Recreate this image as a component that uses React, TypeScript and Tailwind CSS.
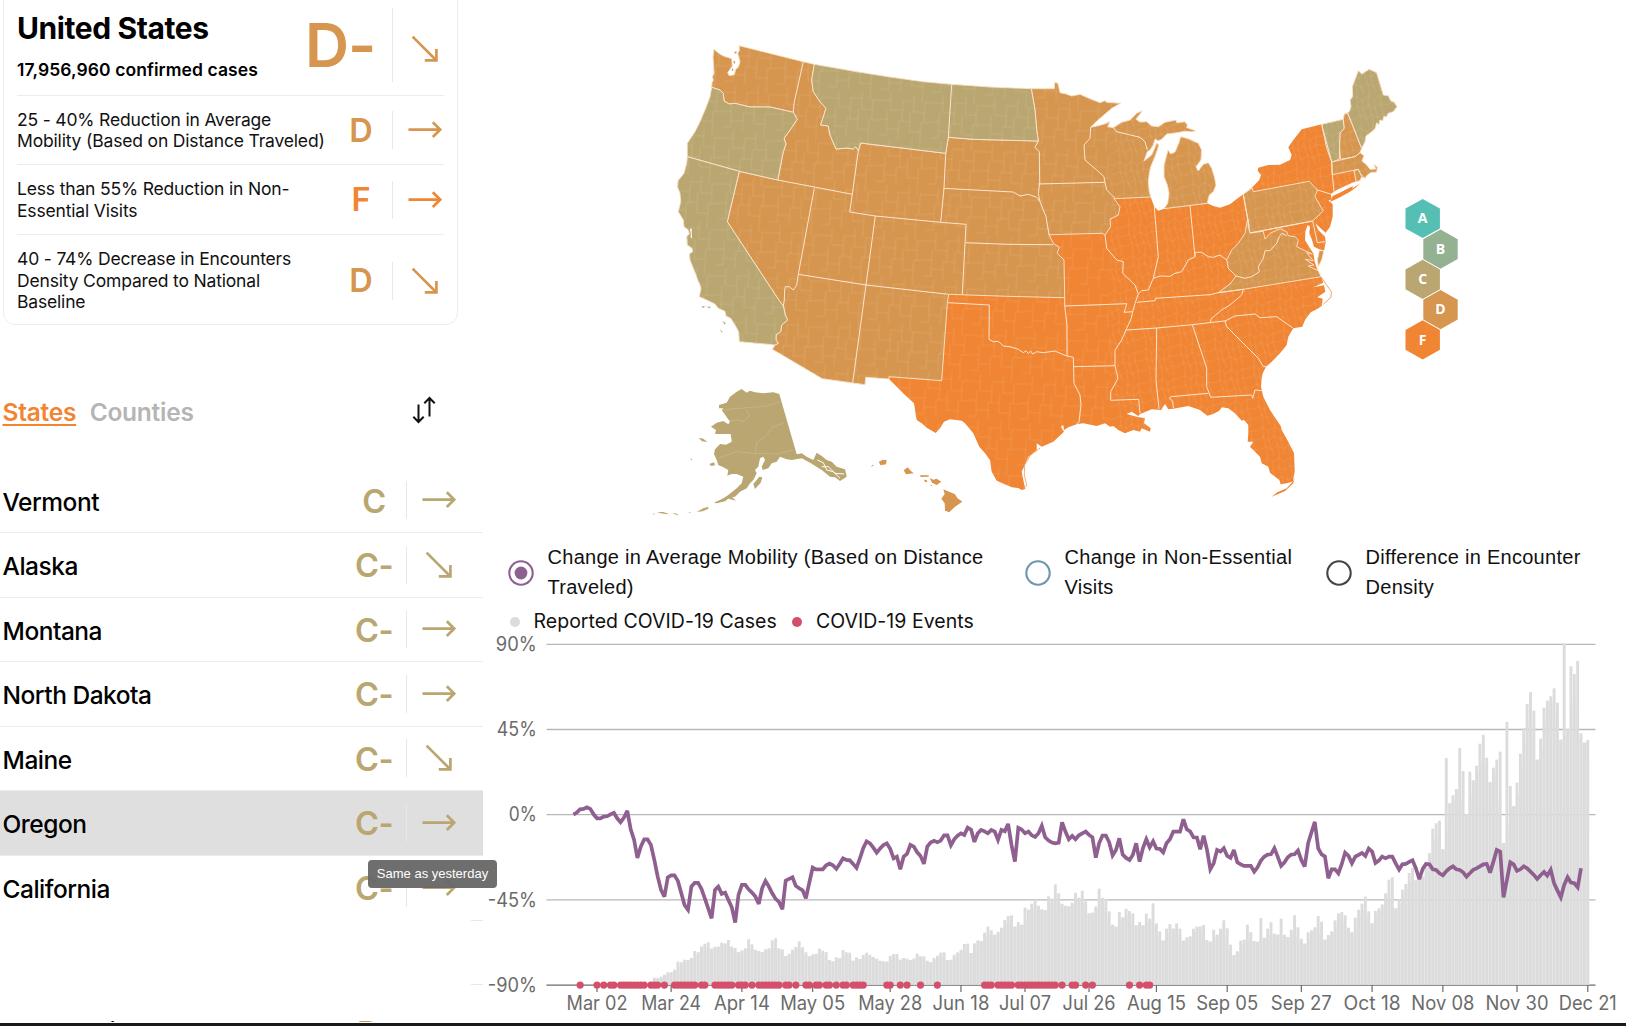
import React from "react";

const GRADE = { A: "#55bfb4", B: "#94b292", C: "#b9a670", D: "#d6964f", F: "#f08533" };

/* ---------- arrows ---------- */

type Trend = "flat" | "down";

function Arrow({ trend, color }: { trend: Trend; color: string }) {
  return (
    <svg width="34" height="30" viewBox="0 0 34 30" fill="none" stroke={color} strokeWidth="2.7" className="shrink-0">
      {trend === "flat" ? (
        <path d="M0.5 14.6H32M24.8 7.2L32.2 14.6L24.8 22" />
      ) : (
        <path d="M4.6 2.6L28.2 26.2M16.8 26.4H28.4V14.9" />
      )}
    </svg>
  );
}

/* ---------- summary card ---------- */

function Metric({ text, grade, color, trend, height }: { text: string[]; grade: string; color: string; trend: Trend; height: string }) {
  return (
    <div className={`flex items-center border-t border-[#ececec] ${height}`}>
      <div className="w-[316px] whitespace-nowrap text-[17.5px] leading-[21.5px] tracking-[-0.17px] text-[#111]">
        {text.map((t) => (
          <div key={t}>{t}</div>
        ))}
      </div>
      <div className="w-[56px] pt-px text-center text-[32.5px] leading-[38px] font-semibold" style={{ color }}>
        {grade}
      </div>
      <div className="ml-[3px] h-[38px] w-px bg-[#e8e8e8]" />
      <div className="ml-[15px]">
        <Arrow trend={trend} color={color} />
      </div>
    </div>
  );
}

function Summary() {
  return (
    <div className="-mt-[12px] ml-[3px] h-[337px] w-[455px] rounded-xl border border-[#ececec] pt-[11px] pr-[13px] pl-[13px]">
      <div className="flex h-[95px]">
        <div className="w-[288px]">
          <div className="pt-[9px] text-[30px] leading-[38px] font-bold tracking-[-0.4px] whitespace-nowrap text-black">United States</div>
          <div className="pt-[12px] text-[17.5px] leading-[22px] font-semibold tracking-[0.08px] whitespace-nowrap text-black">17,956,960 confirmed cases</div>
        </div>
        <div className="-mt-[2px] w-[87px] text-[61px] leading-[94px] font-semibold tracking-[-1px] whitespace-nowrap text-[#d6964f]">D-</div>
        <div className="mt-[8px] h-[74px] w-px bg-[#e8e8e8]" />
        <div className="mt-[34px] ml-[15px]">
          <Arrow trend="down" color={GRADE.D} />
        </div>
      </div>
      <Metric text={["25 - 40% Reduction in Average", "Mobility (Based on Distance Traveled)"]} grade="D" color={GRADE.D} trend="flat" height="h-[69px]" />
      <Metric text={["Less than 55% Reduction in Non-", "Essential Visits"]} grade="F" color={GRADE.F} trend="flat" height="h-[70px]" />
      <Metric text={["40 - 74% Decrease in Encounters", "Density Compared to National", "Baseline"]} grade="D" color={GRADE.D} trend="down" height="h-[92px]" />
    </div>
  );
}

/* ---------- state list ---------- */

const STATES: { name: string; grade: string; trend: Trend }[] = [
  { name: "Vermont", grade: "C", trend: "flat" },
  { name: "Alaska", grade: "C-", trend: "down" },
  { name: "Montana", grade: "C-", trend: "flat" },
  { name: "North Dakota", grade: "C-", trend: "flat" },
  { name: "Maine", grade: "C-", trend: "down" },
  { name: "Oregon", grade: "C-", trend: "flat" },
  { name: "California", grade: "C-", trend: "flat" },
];

function StateList() {
  return (
    <div className="w-[483px]">
      {STATES.map((s) => (
        <div
          key={s.name}
          className={`flex h-[64.5px] items-center ${s.name === "California" ? "" : "border-b border-[#ececec]"} ${s.name === "Oregon" ? "bg-[#dfdfdf]" : ""}`}
        >
          <div className="w-[343px] pt-[4px] pl-[2.5px] text-[24.5px] font-medium tracking-[-0.48px] text-black">{s.name}</div>
          <div className="w-[62px] pt-[3px] text-center text-[32.5px] leading-[38px] font-semibold tracking-[-0.5px] text-[#b9a670]">{s.grade}</div>
          <div className="ml-px h-[38px] w-px bg-[#e8e8e8]" />
          <div className="ml-[15px]">
            <Arrow trend={s.trend} color={GRADE.C} />
          </div>
        </div>
      ))}
      <div className="ml-auto h-[65px] w-[12px] border-y border-[#e8e8e8]" />
      <div className="flex h-[37px] items-end overflow-hidden">
        <div className="flex h-[3px] w-full items-start">
          <div className="w-[357px] pl-[3px] text-[24.5px] leading-[24px] font-medium tracking-[-0.4px] text-black">New Mexico</div>
          <div className="text-[32.5px] leading-[29px] font-semibold text-[#d6964f]">D+</div>
        </div>
      </div>
    </div>
  );
}

/* ---------- map ---------- */

/* The map is plotted on overlapping sheets; every sheet has its own origin in a grid of thirds of a pixel. */
const SHEETS = {
  nw: [1920, 90],
  sw: [1920, 840],
  n: [2820, 180],
  ne: [3540, 180],
  s: [2820, 870],
} as const;

type Piece = [keyof typeof SHEETS, string];

function trace(pieces: Piece[]): string {
  return pieces
    .map(([sheet, pts]) => {
      const [ox, oy] = SHEETS[sheet];
      return pts
        .trim()
        .split(/\s+/)
        .map((p) => {
          const [x, y] = p.split(",").map(Number);
          return `${((x + ox) / 3).toFixed(1)},${((y + oy) / 3).toFixed(1)}`;
        })
        .join(" ");
    })
    .join(" ");
}

const MN_WI_MI_SHORE: Piece = [
  "n",
  "274,86 343,86 344,67 354,70 360,98 376,101 395,108 420,103 445,114 480,128 495,122 500,127 542,130 515,145 480,175 458,195 452,202 475,197 500,190 510,184 503,200 520,203 545,187 570,180 590,160 607,152 600,162 588,178 600,186 620,185 635,198 655,200 675,187 708,180 710,188 735,185 742,195 740,203 768,212 755,215 735,214 700,220 680,222 665,238 655,242 645,238 640,255 630,270 622,275 612,303 635,285 650,250 657,254 645,290 632,320 628,340 625,365 628,395 632,411",
];
const LOWER_MI: Piece[] = [
  ["n", "672,446 683,430 687,400 682,375 672,350 672,315 680,285 684,270 692,282 705,276 718,245 722,230 745,236 775,250 785,270 783,300 768,320 775,333 788,315"],
  ["ne", "72,312 85,308 95,325 103,350 108,375 100,395 88,405 82,430"],
];
const WA_COAST: Piece = ["nw", "215,172 216,158 220,150 217,140 222,130 219,80 222,57 232,67 248,77 275,86 277,108 263,128 268,137 283,134 287,118 295,112 300,95 293,70 298,62 298,47"];
const PACIFIC_SOUTH: Piece = ["sw", "405,195 298,185 296,155 285,135 272,115 258,108 255,94 235,85 225,72 200,60 178,50 183,25 176,5"];
const PACIFIC_NORTH: Piece = ["nw", "175,755 168,735 150,690 148,672 158,665 156,655 142,645 140,620 148,612 145,600 132,590 130,570 115,545 122,515 120,490 112,470 114,452 132,430 140,400 142,380"];
const OR_COAST = "142,380 142,340 165,305 180,275 197,235 210,200 215,172";
const CA_EAST = "298,424 262,575 415,808";
const CO_RIVER = "430,78 436,105 443,120 425,135 422,155 408,165 408,180 415,190 405,195";

const OUTLINE = trace([
  WA_COAST,
  ["nw", "490,95 523,103 650,125 750,141 850,155 935,163"],
  ["n", "150,81"],
  MN_WI_MI_SHORE,
  ["n", "643,440 655,452"],
  ...LOWER_MI,
  ["ne", "100,438 120,443 150,433 175,413 190,403 217,382 238,360 243,345 233,332 235,323 265,315 300,314 330,300 335,285 325,262 340,240 365,208 425,193 490,178 493,162 500,160 508,155 513,140 510,120 518,110 517,80 535,32 545,42 568,28 590,38 610,105 625,107 632,122 643,127 651,140 640,155 625,160 618,172 612,168 608,182 600,180 596,195 590,188 586,205 575,215 558,228 555,245 545,265 540,278 552,287 546,303 560,315 570,328 587,327 582,313 592,322 590,336 572,338 562,345 555,355 545,350 540,362 522,366 495,378 470,390 452,402 455,418 445,422 458,432 458,470 450,500 437,518 425,508 406,490 415,510 435,530 437,545 432,572 418,568 402,560 396,540 388,520 390,500 383,495 376,515 375,540 387,560 400,580 404,605 412,628 423,650 430,668 400,682 432,676 436,695 412,712 428,716 425,738 410,748 392,757 375,780 367,800 340,805 325,830 320,855 300,880 275,905 258,920 248,940"],
  ["s", "965,265 963,290 970,320 990,360 1022,408 1025,420 1045,455 1062,490 1064,545 1058,575 1040,580 1022,583 1018,570 990,548 985,530 965,520 960,500 930,470 940,455 923,455 925,430 925,405 912,390 905,392 885,370 865,355 845,352 838,362 820,372 802,377 780,360 745,348 700,356 685,358 675,342 668,352 664,360 635,358 610,368 600,372 595,378 575,365 560,372 590,380 615,385 612,400 632,415 630,425 605,415 600,425 580,420 555,430 535,420 520,408 510,410 495,400 470,408 430,400 412,402 385,412 372,420 370,405 363,410 372,425 340,455 305,470 290,460 290,480 265,500 252,530 245,545 250,570 256,597 245,600 235,594 215,592 170,572 155,545 150,510 135,490 118,470 100,430 75,400 65,392 30,388 12,395 0,415"],
  ["sw", "887,459 860,443 845,430 830,420 825,390 822,370 795,345 765,315 747,297 677,292 675,314 547,296 397,208"],
  PACIFIC_SOUTH,
  PACIFIC_NORTH,
  ["nw", OR_COAST],
]);

const D_STATES = [
  trace([
    WA_COAST,
    ["nw", "490,95 523,103 515,150 520,185 540,215 558,235 542,285 565,288 570,315 588,357 620,354 640,357 647,350 655,362 662,339 917,370 925,322"],
    ["n", "100,238 295,243 290,210 285,150"],
    MN_WI_MI_SHORE,
    ["n", "522,416 540,440 535,465 510,478 512,500 495,525 487,520 327,524 340,550 358,562 352,580 372,600 374,713 200,709 26,703"],
    ["sw", "922,70 905,302 747,290 747,297 677,292 675,314 547,296 397,208 405,195 415,190 408,180 408,165 422,155 425,135 443,120 436,105 430,78"],
    ["nw", "415,808 262,575 298,424 413,450 430,365 438,342 432,325 450,300 472,268 460,247 390,231 330,231 285,220 268,222 252,213 250,190 240,180"],
  ]),
  trace(LOWER_MI),
  trace([["ne", "190,403 217,384 220,395 388,364 412,390 405,410 430,453 398,483 210,519"]]),
  trace([["ne", "203,475 205,500 210,519 250,514 255,537 270,520 300,506 320,515 325,527 345,530 355,540 350,560 375,572 397,582 380,578 400,602 376,598 402,615 385,618 415,632 423,650 190,688 115,698 150,672 168,648 145,625 140,600 155,570 175,550 195,520"]]),
  trace([["ne", "432,572 425,600 415,620 412,600 418,572"]]),
  trace([["ne", "490,178 493,162 503,160 545,265 540,278 525,290 482,298 478,260 480,220 492,205"]]),
  trace([["ne", "455,306 482,300 525,290 540,278 552,287 546,303 560,315 570,328 587,327 582,313 592,322 590,336 572,338 562,345 555,355 540,340 535,328 457,344"]]),
  trace([["ne", "522,332 535,328 545,350 540,362 528,365"]]),
];

const C_STATES = [
  trace([["nw", `215,172 240,180 250,190 252,213 268,222 285,220 330,231 390,231 460,247 472,268 450,300 432,325 438,342 430,365 413,450 298,424 ${OR_COAST}`]]),
  trace([["nw", `142,380 ${CA_EAST}`], ["sw", CO_RIVER], PACIFIC_SOUTH, PACIFIC_NORTH]),
  trace([
    ["nw", "523,103 515,150 520,185 540,215 558,235 542,285 565,288 570,315 588,357 620,354 640,357 647,350 655,362 662,339 917,370 925,322"],
    ["n", "100,238 295,243 290,210 285,150 274,86 150,81 35,73"],
    ["nw", "850,155 750,141 650,125"],
  ]),
  trace([["ne", "425,193 490,178 492,205 480,220 478,298 455,306 440,265"]]),
  trace([["ne", "503,158 508,155 513,140 510,120 518,110 517,80 535,32 545,42 568,28 590,38 610,105 625,107 632,122 643,127 651,140 640,155 625,160 618,172 612,168 608,182 600,180 596,195 590,188 586,205 575,215 558,228 555,245 545,265"]]),
];

const BORDERS = [
  trace([["nw", "490,95 462,220 460,247"]]),
  trace([["nw", "935,163 925,322"]]),
  trace([["nw", "413,450 637,493"]]),
  trace([["nw", "655,362 637,493 629,546 706,558 902,577 912,475 917,370"]]),
  trace([["nw", "523,475 475,733 470,765 460,780 448,770 436,770 434,780"], ["sw", "433,60 430,78"]]),
  trace([["nw", "706,558 678,765"], ["sw", "638,308"]]),
  trace([["nw", "475,733 678,765 925,793"]]),
  trace([["nw", "902,577 978,583"], ["n", "67,703"]]),
  trace([["n", "10,385 220,396 240,408 265,403 290,412 300,425"]]),
  trace([["n", "295,243 285,262 298,275 299,370 295,400 300,425 318,470 327,524"]]),
  trace([["n", "294,372 495,367"]]),
  trace([["n", "452,202 450,235 432,255 435,300 470,330 492,350 495,367 500,390 525,415"]]),
  trace([["n", "520,203 530,215 600,232 615,245 622,270"]]),
  trace([["n", "77,548 200,553 340,554"]]),
  trace([["n", "374,713 374,738 560,731 553,757 578,755"]]),
  trace([["s", "374,48 381,105 381,198"]]),
  trace([["s", "24,38 148,45 147,148 160,155 175,154 190,168 210,170 235,178 250,188 258,182 265,191 272,183 278,192 290,185 310,188 345,183 365,192 381,198 400,202 402,280 420,315 423,345 417,395 410,402"]]),
  trace([["s", "402,230 525,227"]]),
  trace([["n", "495,525 500,565 530,600 550,605 548,640 585,675 595,702 585,730 578,755"], ["s", "574,85 560,115 545,150 525,180 525,227 534,265 512,305 512,331 596,328 600,370"]]),
  trace([["n", "643,440 655,590 640,655"]]),
  trace([["n", "595,702 605,692 625,690 640,655 660,648 690,649 705,640 725,635 745,600 765,590"], ["ne", "45,577 65,577 85,590 100,592 120,585 140,600"]]),
  trace([["n", "750,437 765,590"]]),
  trace([["n", "590,727 645,722 647,715 810,704"], ["ne", "115,698 190,688"]]),
  trace([["s", "558,120 650,114 757,104 860,92"]]),
  trace([["ne", "190,688 185,705 150,735 125,750 95,775 90,787"]]),
  trace([["ne", "135,783 165,768 225,762 240,773 290,770 340,805"]]),
  trace([["ne", "135,783 140,800 200,860 235,895 250,920 258,920"]]),
  trace([["s", "650,114 648,270 657,357"]]),
  trace([["s", "757,104 800,235 800,290 812,322 935,315 938,325 945,300 965,302"]]),
  trace([["s", "700,354 698,333 688,325 692,320 805,310"]]),
  trace([["ne", "425,193 455,306 457,344 462,395"]]),
  trace([["ne", "412,390 452,402"]]),
  trace([["ne", "190,403 203,475 208,500"]]),
  trace([["ne", "398,483 412,548 435,545"]]),
  trace([["ne", "210,519 398,483"]]),
  trace([["ne", "320,527 305,520 298,530 290,550 270,572 255,572 250,595 235,620 238,635 215,650 195,655 168,648"]]),
];

const ISLANDS_F = [
  trace([["ne", "450,426 458,408 485,395 505,385 520,378 516,386 540,370 525,385 510,395 480,412"]]),
  trace([["s", "1064,560 1060,580 1035,603 1015,612 995,620 1012,607 1040,595 1058,575"]]),
];
const ALASKA = [
  trace([["sw", "418,342 470,523 485,520 500,530 520,540 530,518 545,528 560,540 575,545 590,560 615,568 620,590 600,603 585,592 570,590 545,570 510,548 485,535 455,540 440,538 420,530 410,545 395,550 385,565 368,570 365,560 375,540 370,530 360,535 355,560 345,570 350,580 340,600 330,610 320,625 300,635 285,650 270,652 255,664 230,670 222,668 250,655 265,645 290,625 305,610 310,590 290,582 275,582 262,587 265,570 250,562 235,555 230,540 222,522 225,508 240,492 258,494 275,485 272,462 250,462 225,462 228,450 213,440 230,428 250,423 265,433 270,425 245,390 250,385 237,385 237,375 260,368 270,350 290,335 305,327 320,338 330,332 345,337 370,340 400,337"]]),
  trace([["sw", "340,612 358,590 367,592 362,608 345,627"]]),
  trace([["sw", "176,473 190,476 202,486 186,484"]]),
  trace([["sw", "208,552 222,547 225,556 214,558"]]),
  trace([["sw", "170,696 190,685 205,680 205,686 188,694"]]),
  trace([["sw", "50,697 70,696 85,701 82,703 62,700"]]),
  trace([["sw", "96,699 112,701 115,706 104,703"]]),
  trace([["sw", "38,702 44,700 42,704"]]),
  trace([["sw", "145,698 152,696 150,700"]]),
  trace([["sw", "260,655 275,650 288,662 272,658"]]),
  trace([["sw", "150,534 158,540 154,541"]]),
  trace([["sw", "183,80 194,78 192,84"]]),
  trace([["sw", "198,80 212,80 210,85"]]),
  trace([["sw", "247,122 257,130 254,134"]]),
  trace([["sw", "240,147 248,157 244,157"]]),
];
const HAWAII = [
  "716,546 728,539 740,540 738,553 722,556",
  "693,562 697,555 703,554",
  "791,571 803,562 812,572 821,580 798,583",
  "840,586 866,586 866,590 842,591",
  "852,599 860,600 862,606 855,606",
  "869,594 880,599 890,596 904,605 890,615 876,608",
  "870,617 877,615 876,619",
  "910,628 945,643 952,654 967,665 945,680 928,697 915,692 914,670 904,656 914,642",
].map((p) => trace([["sw", p]]));

const HEXES = [
  { l: "A", x: 1422.7, y: 218.5 },
  { l: "B", x: 1440.5, y: 249.1 },
  { l: "C", x: 1422.7, y: 279.3 },
  { l: "D", x: 1440.5, y: 309.6 },
  { l: "F", x: 1422.7, y: 339.8 },
] as const;

function UsMap() {
  const edge = "#fbe6d0";
  return (
    <svg viewBox="483 0 1143 535" width="1143" height="535" className="block shrink-0" strokeLinejoin="round">
      <defs>
        <pattern id="plains" width="52" height="46" patternUnits="userSpaceOnUse" patternTransform="rotate(3)">
          <path
            d="M0 8H11V17H23V7H34V18H45V8H52M0 27H8V36H20V28H31V38H42V28H52M11 0V8M23 17V28M34 0V7M45 18V28M8 17V27M20 36V46M42 38V46M31 18V28M0 43H8V36M42 0V8"
            fill="none"
            stroke="#fff"
            strokeOpacity="0.15"
            strokeWidth="0.8"
          />
        </pattern>
        <pattern id="hills" width="41" height="37" patternUnits="userSpaceOnUse" patternTransform="rotate(-8) scale(0.85)">
          <path
            d="M0 5L7 2L13 7L21 3L27 8L35 4L41 5M0 16L6 13L12 18L19 13L26 18L33 14L41 16M0 28L8 24L14 29L22 25L28 30L35 26L41 28M7 2L8 0M13 7L12 18M21 3L22 0M27 8L26 18M6 13L7 2M19 13L21 3M33 14L35 4M8 24L6 13M14 29L12 18M22 25L19 13M28 30L26 18M35 26L33 14M8 37L8 24M14 29L16 37M22 37L22 25M28 30L30 37M35 37L35 26"
            fill="none"
            stroke="#fff"
            strokeOpacity="0.14"
            strokeWidth="0.8"
          />
        </pattern>
        <clipPath id="east">
          <rect x="1110" y="0" width="300" height="535" />
        </clipPath>
        <clipPath id="west">
          <rect x="600" y="0" width="510" height="535" />
        </clipPath>
      </defs>
      <polygon points={OUTLINE} fill={GRADE.F} />
      {ISLANDS_F.map((p) => (
        <polygon key={p} points={p} fill={GRADE.F} />
      ))}
      <g stroke={edge} strokeWidth="0.9">
        {D_STATES.map((p) => (
          <polygon key={p} points={p} fill={GRADE.D} />
        ))}
        {C_STATES.map((p) => (
          <polygon key={p} points={p} fill={GRADE.C} />
        ))}
      </g>
      <polygon points={OUTLINE} fill="url(#plains)" clipPath="url(#west)" />
      <polygon points={OUTLINE} fill="url(#hills)" clipPath="url(#east)" />
      {BORDERS.map((p) => (
        <polyline key={p} points={p} fill="none" stroke={edge} strokeWidth="1" />
      ))}
      {ALASKA.map((p) => (
        <polygon key={p} points={p} fill={GRADE.C} />
      ))}
      <g fill="none" stroke="#fff" strokeOpacity="0.2" strokeWidth="0.8">
        <polyline points={trace([["sw", "245,390 300,385 380,378 420,365"]])} />
        <polyline points={trace([["sw", "250,425 290,420 315,425 328,405 318,390"]])} />
        <polyline points={trace([["sw", "345,520 350,490 380,465 400,440 430,430"]])} />
        <polyline points={trace([["sw", "235,535 290,515 340,520 410,522 460,510"]])} />
      </g>
      <g fill="none" stroke="#fff" strokeWidth="1">
        <polyline points={trace([["sw", "532,540 550,548 560,570 580,575 600,595"]])} />
        <polyline points={trace([["sw", "545,560 565,560 585,580 612,582"]])} />
      </g>
      {HAWAII.map((p) => (
        <polygon key={p} points={p} fill={GRADE.D} />
      ))}
      <g fill={GRADE.D}>
        <polygon points={trace([["nw", "279,95 286,92 284,102"]])} />
        <polygon points={trace([["nw", "282,66 290,64 288,72"]])} />
        <polygon points={trace([["nw", "274,120 279,114 280,124"]])} />
      </g>
      <polygon points={trace([["nw", "150,597 155,595 155,612 157,626 152,622 152,610"]])} fill="#fff" />
      <polyline points={trace([["s", "256,592 260,585 253,555 254,525 270,497 300,474"]])} fill="none" stroke="#f4a266" strokeWidth="0.9" />
      <polyline points={trace([["ne", "423,650 440,675 454,695 453,712 430,733"]])} fill="none" stroke="#f4a266" strokeWidth="1" />
      {HEXES.map((h) => (
        <g key={h.l}>
          <polygon
            points={`${h.x},${h.y - 19.6} ${h.x + 17.2},${h.y - 9.9} ${h.x + 17.2},${h.y + 9.9} ${h.x},${h.y + 19.6} ${h.x - 17.2},${h.y + 9.9} ${h.x - 17.2},${h.y - 9.9}`}
            fill={GRADE[h.l]}
          />
          <text x={h.x} y={h.y + 4.8} textAnchor="middle" fill="#fff" className="font-['Open_Sans',sans-serif] text-[14px] font-bold">
            {h.l}
          </text>
        </g>
      ))}
    </svg>
  );
}

/* ---------- chart ---------- */

const DAY = 3.37;
const X0 = 597;
const dayX = (d: number) => X0 + d * DAY;

/* Levels in thirds of a pixel below the top of each half of the season. */
const LINE_SPRING = [
  104, 98, 88, 87, 82, 87, 103, 115, 115, 110, 109, 103, 99, 115, 127, 113, 93, 148, 180, 234, 200, 178, 178, 195, 240, 290, 330, 350, 292, 286, 286, 303, 340, 376, 390, 320, 309, 309, 327, 355, 385, 415, 330, 320, 342, 338, 360, 382, 428, 345, 315, 315, 328, 338, 350, 372, 325, 303, 320, 340, 357, 366, 388, 302, 297, 292, 318, 325, 331, 355, 308, 263, 268, 268, 268, 256, 251, 256, 267, 252, 235, 240, 241, 252, 264, 235, 205, 184, 190, 203, 218, 206, 195, 190, 207, 235, 230, 268, 230, 222, 195, 200, 217, 228, 252, 200, 188, 183, 187, 182, 166, 166, 196, 178, 167, 160, 165, 143, 149, 186, 160, 150, 154, 160, 150, 155, 180, 150, 154, 132, 195, 245, 144, 149, 160, 155, 166, 171, 160, 138, 172, 182, 188, 190, 188,
];
const LINE_AUTUMN = [
  187, 215, 238, 228, 238, 226, 220, 215, 225, 232, 293, 250, 227, 227, 247, 286, 270, 235, 284, 294, 300, 285, 250, 305, 265, 238, 262, 244, 266, 267, 277, 250, 238, 215, 215, 215, 178, 208, 214, 232, 233, 268, 227, 270, 328, 310, 270, 275, 265, 288, 294, 270, 307, 313, 318, 318, 318, 335, 322, 302, 290, 284, 283, 265, 290, 318, 307, 292, 284, 283, 272, 300, 320, 250, 218, 186, 265, 283, 289, 355, 328, 328, 340, 312, 278, 288, 310, 290, 285, 279, 288, 266, 275, 309, 302, 290, 295, 290, 290, 310, 329, 313, 312, 306, 301, 325, 358, 327, 312, 313, 328, 330, 340, 346, 334, 325, 319, 328, 330, 337, 350, 340, 330, 325, 319, 313, 312, 338, 305, 270, 275, 412, 360, 307, 313, 333, 328, 319, 325, 335, 345, 357, 346, 336, 347, 330, 370, 392, 412, 375, 352, 368, 370, 382, 325,
];
const BARS_SPRING = [
  594, 596, 591, 585, 578, 578, 570, 546, 548, 540, 541, 535, 514, 518, 500, 492, 488, 507, 501, 501, 489, 491, 481, 501, 505, 518, 512, 506, 479, 494, 510, 514, 517, 509, 506, 482, 476, 506, 509, 529, 522, 510, 502, 485, 503, 518, 530, 524, 522, 507, 513, 517, 541, 545, 533, 536, 511, 518, 519, 543, 533, 538, 526, 519, 525, 532, 537, 543, 545, 546, 529, 523, 523, 540, 535, 537, 541, 537, 522, 530, 530, 543, 548, 535, 528, 519, 518, 541, 540, 525, 518, 510, 493, 492, 520, 491, 482, 484, 459, 441, 452, 465, 456, 444, 421, 409, 407, 441, 427, 435, 384, 390, 372, 360, 378, 389, 392, 350, 357, 314,
];
const BARS_AUTUMN = [
  401, 432, 438, 440, 429, 399, 414, 393, 425, 461, 459, 440, 387, 414, 418, 455, 495, 501, 457, 473, 447, 454, 461, 497, 487, 497, 462, 477, 431, 491, 515, 543, 507, 493, 507, 491, 507, 543, 533, 530, 507, 501, 500, 496, 541, 546, 510, 525, 507, 482, 506, 555, 586, 575, 543, 540, 495, 518, 544, 546, 475, 534, 507, 488, 522, 525, 477, 525, 532, 510, 467, 503, 537, 552, 518, 512, 503, 469, 486, 540, 526, 515, 482, 461, 457, 467, 504, 518, 474, 450, 432, 411, 455, 491, 454, 446, 434, 401, 360, 353, 446, 419, 390, 373, 340, 325, 362, 358, 350, 310, 280, 207, 191, 183, 269, -5, 131, 107, 88, -35, 34, 163, 36, 62, 18, -48, -75, -6, 68, 24, 0, -24, 250, -113, 79, 140, 69, -18, -95, -167, -203, -147, 0, -63, -156, -177, -190, -214, -171, -60, -348, -92, -280, -257, -296, -79, -51, -59,
];

const LINE = [...LINE_SPRING.map((v) => v - 104), ...LINE_AUTUMN.map((v) => v - 164)].map((v, i) => `${dayX(i - 7).toFixed(1)},${(814.6 + v / 3).toFixed(1)}`).join(" ");
const BARS = [...BARS_SPRING.map((v) => 616 - v), ...BARS_AUTUMN.map((v) => 676 - v)].map((v) => v / 3);
const FIRST_BAR = 295 - BARS.length;

const EVENT_RUNS = [
  [-5, -5], [0, 0], [2, 2], [4, 5], [7, 14], [16, 18], [20, 20], [23, 29], [31, 32], [35, 40], [42, 44], [46, 46], [48, 54], [56, 57], [59, 59], [62, 63], [65, 66], [68, 69], [71, 71], [73, 74], [76, 79],
  [86, 87], [90, 90], [92, 92], [96, 96], [101, 101], [115, 117], [119, 123], [125, 136], [138, 138], [141, 142], [145, 145], [147, 147], [158, 158], [161, 161], [163, 164],
];
const EVENTS = EVENT_RUNS.flatMap(([a, b]) => Array.from({ length: b - a + 1 }, (_, i) => a + i));

const TICKS: [number, string, number][] = [
  [0, "Mar 02", 61], [22, "Mar 24", 60], [43, "Apr 14", 56], [64, "May 05", 65], [87, "May 28", 64], [108, "Jun 18", 57], [127, "Jul 07", 52], [146, "Jul 26", 53],
  [166, "Aug 15", 59], [187, "Sep 05", 62], [209, "Sep 27", 61], [230, "Oct 18", 57], [251, "Nov 08", 63], [273, "Nov 30", 63], [294, "Dec 21", 58],
];
const LEVELS: [string, number, number][] = [
  ["90%", 644.3, 41], ["45%", 729.5, 40], ["0%", 814.6, 28], ["-45%", 899.9, 49], ["-90%", 985.2, 49],
];

function Chart() {
  return (
    <svg viewBox="483 636 1143 387" width="1143" height="387" className="block shrink-0 overflow-visible font-['Inter',sans-serif]">
      {LEVELS.map(([label, y, w], i) => (
        <g key={label}>
          <line x1="546.5" x2="1595.5" y1={y} y2={y} stroke={i === 4 ? "#6b6b6b" : "#b8b8b8"} strokeWidth="1.3" />
          <text x={536.8 - w} y={y + 6.8} textLength={w} lengthAdjust="spacingAndGlyphs" fill="#6b6b6b" className="text-[19.5px]">
            {label}
          </text>
        </g>
      ))}
      {BARS.map((h, i) => (
        <rect key={i} x={dayX(FIRST_BAR + i) - 1.45} y={985 - h} width="2.9" height={h} fill="#dcdcdc" />
      ))}
      <polygon
        points={`${dayX(FIRST_BAR) - 1.5},985 ${BARS.map((h, i) => `${dayX(FIRST_BAR + i).toFixed(1)},${(985 - Math.min(h, BARS[i + 1] ?? h, BARS[i - 1] ?? h)).toFixed(1)}`).join(" ")} ${dayX(294) + 1.5},985`}
        fill="#dcdcdc"
        fillOpacity="0.5"
      />
      <polyline points={LINE} fill="none" stroke="#8f608f" strokeWidth="3.7" strokeLinejoin="miter" strokeMiterlimit="3" />
      {TICKS.map(([d, label, w]) => (
        <g key={label}>
          <line x1={dayX(d)} x2={dayX(d)} y1="985" y2="992" stroke="#6b6b6b" strokeWidth="1.2" />
          <text x={dayX(d) - w / 2} y="1009.7" textLength={w} lengthAdjust="spacingAndGlyphs" fill="#6b6b6b" className="text-[19.5px]">
            {label}
          </text>
        </g>
      ))}
      {EVENTS.map((d) => (
        <circle key={d} cx={dayX(d)} cy="985.1" r="3.6" fill="#d4506a" />
      ))}
    </svg>
  );
}

/* ---------- legend ---------- */

function Radio({ color, on }: { color: string; on?: boolean }) {
  return (
    <svg width="26" height="26" viewBox="0 0 26 26" className="shrink-0">
      <circle cx="13" cy="13" r="11.7" fill="none" stroke={color} strokeWidth="2.1" />
      {on && <circle cx="13" cy="13" r="6.4" fill={color} />}
    </svg>
  );
}

function Option({ lines, color, on, width }: { lines: string[]; color: string; on?: boolean; width: string }) {
  return (
    <div className={`flex items-center gap-[13.5px] ${width}`}>
      <Radio color={color} on={on} />
      <div className="-mt-[2px] font-['Liberation_Sans',Arial,sans-serif] text-[20px] leading-[30px] tracking-[0.28px] whitespace-nowrap text-[#111]">
        {lines.map((l) => (
          <div key={l}>{l}</div>
        ))}
      </div>
    </div>
  );
}

function Legend() {
  return (
    <div className="h-[101px] pl-[25px]">
      <div className="flex h-[76px] items-center">
        <Option lines={["Change in Average Mobility (Based on Distance", "Traveled)"]} color="#8f608f" on width="w-[517px]" />
        <Option lines={["Change in Non-Essential", "Visits"]} color="#6c96b0" width="w-[301px]" />
        <Option lines={["Difference in Encounter", "Density"]} color="#444444" width="w-[260px]" />
      </div>
      <div className="flex h-[22px] items-center text-[19.5px] tracking-[0.02px] whitespace-nowrap text-[#111]">
        <span className="ml-[2px] h-[10px] w-[10px] rounded-full bg-[#dcdcdc]" />
        <span className="ml-[13.5px] w-[258.5px]">Reported COVID-19 Cases</span>
        <span className="h-[10px] w-[10px] rounded-full bg-[#d4506a]" />
        <span className="ml-[14px]">COVID-19 Events</span>
      </div>
    </div>
  );
}

export default function App() {
  return (
    <div className="relative h-[1028px] w-[1626px] overflow-hidden bg-white font-['Inter',sans-serif]">
      <div className="flex h-[1023px] overflow-hidden">
        <aside className="flex w-[483px] shrink-0 flex-col">
          <Summary />
          <div className="mt-[68px] flex h-[38px] items-center text-[24.5px] font-semibold tracking-[-0.25px]">
            <span className="ml-[2.5px] text-[#f08533] underline decoration-2 underline-offset-[3px]">States</span>
            <span className="ml-[13.5px] text-[#b5b5b5]">Counties</span>
            <svg width="24" height="28" viewBox="0 0 24 28" fill="none" stroke="#111" strokeWidth="2" className="mb-[5px] ml-auto mr-[47.5px]">
              <path d="M6.5 8.5V25.5M1.3 20.7L6.5 26L11.7 20.7M17.5 20.5V2.5M12.3 7.3L17.5 2L22.7 7.3" />
            </svg>
          </div>
          <div className="h-[37.5px] shrink-0" />
          <StateList />
        </aside>
        <section className="flex w-[1143px] shrink-0 flex-col">
          <UsMap />
          <Legend />
          <Chart />
        </section>
      </div>
      <div className="h-[3px] bg-[#17191c]" />
      <div className="absolute top-[860px] left-[368px] flex h-[28px] w-[129px] items-center justify-center rounded bg-[#666666]/95 font-['Liberation_Sans',Arial,sans-serif] text-[13px] whitespace-nowrap text-white">
        Same as yesterday
      </div>
    </div>
  );
}
